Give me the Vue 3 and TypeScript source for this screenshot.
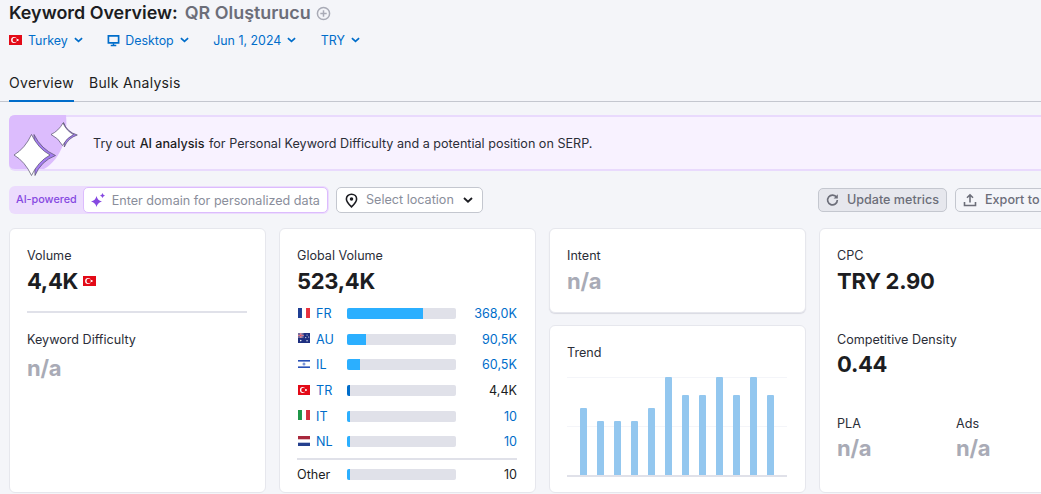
<script setup lang="ts">
interface CountryRow {
  flag: string
  code: string
  pct: number
  value: string
  current?: boolean
}

const filters = ['Turkey', 'Desktop', 'Jun 1, 2024', 'TRY']

const countries: CountryRow[] = [
  { flag: 'fr', code: 'FR', pct: 70, value: '368,0K' },
  { flag: 'au', code: 'AU', pct: 17.5, value: '90,5K' },
  { flag: 'il', code: 'IL', pct: 12, value: '60,5K' },
  { flag: 'tr', code: 'TR', pct: 2.8, value: '4,4K', current: true },
  { flag: 'it', code: 'IT', pct: 2.8, value: '10' },
  { flag: 'nl', code: 'NL', pct: 2.8, value: '10' }
]

// bar heights in px, chart is 98px tall
const trend = [67, 54, 54, 54, 67, 98, 80, 80, 98, 80, 98, 80]
</script>

<template>
  <div class="page">
    <svg class="defs" width="0" height="0" aria-hidden="true">
      <symbol id="flag-tr" viewBox="0 0 13 10" preserveAspectRatio="none">
        <rect width="13" height="10" fill="#e30a17" />
        <circle cx="5" cy="5" r="2.9" fill="#fff" />
        <circle cx="5.8" cy="5" r="2.3" fill="#e30a17" />
        <circle cx="8.6" cy="5" r="1.1" fill="#fff" />
      </symbol>
      <symbol id="flag-fr" viewBox="0 0 13 10" preserveAspectRatio="none">
        <rect width="13" height="10" fill="#fff" />
        <rect width="4.3" height="10" fill="#1f3f94" />
        <rect x="8.7" width="4.3" height="10" fill="#e8303c" />
      </symbol>
      <symbol id="flag-au" viewBox="0 0 13 10" preserveAspectRatio="none">
        <rect width="13" height="10" fill="#1e2f80" />
        <rect width="6" height="5" fill="#7b6f9e" />
        <path d="M0 2.5h6M3 0v5" stroke="#e8e0ea" stroke-width="1.2" />
        <path d="M0 2.5h6M3 0v5" stroke="#d0283c" stroke-width=".6" />
        <circle cx="3" cy="7.6" r=".8" fill="#fff" />
        <circle cx="9.8" cy="2" r=".6" fill="#fff" />
        <circle cx="11.6" cy="4" r=".6" fill="#fff" />
        <circle cx="8.4" cy="4.6" r=".6" fill="#fff" />
        <circle cx="9.8" cy="7.8" r=".7" fill="#fff" />
      </symbol>
      <symbol id="flag-il" viewBox="0 0 13 10" preserveAspectRatio="none">
        <rect width="13" height="10" fill="#fff" />
        <rect y="1" width="13" height="1.6" fill="#2a52b8" />
        <rect y="7.4" width="13" height="1.6" fill="#2a52b8" />
        <circle cx="6.5" cy="5" r="1.6" fill="#7d97d8" />
      </symbol>
      <symbol id="flag-it" viewBox="0 0 13 10" preserveAspectRatio="none">
        <rect width="13" height="10" fill="#fff" />
        <rect width="4.3" height="10" fill="#1f9648" />
        <rect x="8.7" width="4.3" height="10" fill="#d32f3c" />
      </symbol>
      <symbol id="flag-nl" viewBox="0 0 13 10" preserveAspectRatio="none">
        <rect width="13" height="10" fill="#fff" />
        <rect width="13" height="3.3" fill="#a8283c" />
        <rect y="6.7" width="13" height="3.3" fill="#24408e" />
      </symbol>
    </svg>

    <header class="head">
      <h1 class="title">
        <span>Keyword Overview:</span>
        <span class="keyword">QR Oluşturucu</span>
        <svg class="plus" viewBox="0 0 16 16" width="15" height="15">
          <circle cx="8" cy="8" r="6.5" fill="none" stroke="#a9abb6" stroke-width="1.6" />
          <path d="M8 4.6v6.8M4.6 8h6.8" stroke="#a9abb6" stroke-width="1.6" />
        </svg>
      </h1>
      <div class="filters">
        <button v-for="f in filters" :key="f" class="filter">
          <svg v-if="f === 'Turkey'" width="13" height="10"><use href="#flag-tr" /></svg>
          <svg v-if="f === 'Desktop'" class="desktop" viewBox="0 0 14 14" width="13" height="13">
            <path d="M1.5 2h11v7.5h-11z" fill="none" stroke="#006dca" stroke-width="1.8" />
            <path d="M4 12.5h6M7 10v2.5" stroke="#006dca" stroke-width="1.6" />
          </svg>
          <span>{{ f }}</span>
          <svg viewBox="0 0 10 6" width="9" height="6">
            <path d="M1 1l4 3.6L9 1" fill="none" stroke="#006dca" stroke-width="1.9" />
          </svg>
        </button>
      </div>
    </header>

    <nav class="tabs">
      <span class="tab active">Overview</span>
      <span class="tab">Bulk Analysis</span>
    </nav>

    <section class="banner">
      <svg class="stars" viewBox="0 0 80 56" width="80" height="56">
        <path d="M6 0H57C58 12 57 22 54 30C50 40 44 49 35 54H6Q0 54 0 48V6Q0 0 6 0Z" fill="#dcbcfd" />
        <path d="M25 19.500Q32 34 46.500 40.500Q32 46 26 60.500Z" fill="#a47cf0" stroke="#55506a" stroke-width=".7" stroke-linejoin="round" />
        <path d="M22.500 19.500Q29 33.500 41 40Q29 46.500 22.500 60.500Q16 46.500 5 40Q16 33.500 22.500 19.500Z" fill="#fff" stroke="#55506a" stroke-width=".7" stroke-linejoin="round" />
        <path d="M54.500 7.500Q58 17 68.300 20Q59 23 55.300 32Z" fill="#a47cf0" stroke="#55506a" stroke-width=".7" stroke-linejoin="round" />
        <path d="M54 8Q57.500 16 64.500 19.500Q57.500 23 53.500 30.500Q49.500 23 42 19.500Q49.500 16 54 8Z" fill="#fff" stroke="#55506a" stroke-width=".7" stroke-linejoin="round" />
      </svg>
      <p class="banner-text">
        Try out <strong>AI analysis</strong> for Personal Keyword Difficulty and a potential position on SERP.
      </p>
    </section>

    <div class="toolbar">
      <div class="ai-box">
        <span class="ai-label">AI-powered</span>
        <div class="ai-input">
          <svg viewBox="0 0 14 14" width="14" height="14">
            <path d="M5.500 3Q6.500 7.500 11 8.500Q6.500 9.500 5.500 14Q4.500 9.500 0 8.500Q4.500 7.500 5.500 3Z" fill="#8649e1" />
            <path d="M11.500 0Q12 2 14 2.500Q12 3 11.500 5Q11 3 9 2.500Q11 2 11.500 0Z" fill="#8649e1" />
          </svg>
          <span>Enter domain for personalized data</span>
        </div>
      </div>
      <div class="location">
        <svg viewBox="0 0 14 16" width="13" height="15">
          <path d="M7 1.200C3.700 1.200 1.500 3.600 1.500 6.500C1.500 10 5 13 7 14.800C9 13 12.500 10 12.500 6.500C12.500 3.600 10.300 1.200 7 1.200Z" fill="none" stroke="#1c1d22" stroke-width="1.700" />
          <circle cx="7" cy="6.500" r="1.900" fill="#1c1d22" />
        </svg>
        <span class="location-text">Select location</span>
        <svg viewBox="0 0 10 6" width="10" height="6">
          <path d="M1 1l4 3.600L9 1" fill="none" stroke="#1c1d22" stroke-width="1.900" />
        </svg>
      </div>
      <div class="actions">
        <button class="btn btn-off">
          <svg viewBox="0 0 14 14" width="14" height="14">
            <path d="M11.500 4.200A5.300 5.300 0 1 0 12.300 7" fill="none" stroke="#6c6e79" stroke-width="1.800" />
            <path d="M12.800 0.800V5.300H8.300Z" fill="#6c6e79" />
          </svg>
          <span class="btn-text">Update metrics</span>
        </button>
        <button class="btn btn-export">
          <svg viewBox="0 0 14 14" width="14" height="14">
            <path d="M7 9.500V2.500M4 4.800L7 1.800L10 4.800M1.500 9V12.500H12.500V9" fill="none" stroke="#6c6e79" stroke-width="1.600" />
          </svg>
          <span class="btn-text">Export to</span>
        </button>
      </div>
    </div>

    <main class="grid">
      <section class="card">
        <div class="label">Volume</div>
        <div class="value value-flag">
          4,4K
          <svg width="13" height="10"><use href="#flag-tr" /></svg>
        </div>
        <hr class="rule" />
        <div class="label">Keyword Difficulty</div>
        <div class="value na kd">n/a</div>
      </section>

      <section class="card">
        <div class="label">Global Volume</div>
        <div class="value">523,4K</div>
        <ul class="countries">
          <li v-for="c in countries" :key="c.code" class="country">
            <svg class="flag" width="12" height="10"><use :href="`#flag-${c.flag}`" /></svg>
            <span class="code">{{ c.code }}</span>
            <span class="bar">
              <span class="bar-fill" :class="{ current: c.current }" :style="{ width: c.pct + '%' }"></span>
            </span>
            <span class="amount" :class="{ dark: c.current }">{{ c.value }}</span>
          </li>
        </ul>
        <div class="country other">
          <span class="other-name">Other</span>
          <span class="bar"><span class="bar-fill" style="width: 2.8%"></span></span>
          <span class="amount dark">10</span>
        </div>
      </section>

      <div class="stack">
        <section class="card card-intent">
          <div class="label">Intent</div>
          <div class="value na">n/a</div>
        </section>
        <section class="card card-trend">
          <div class="label">Trend</div>
          <div class="chart">
            <span v-for="(h, i) in trend" :key="i" class="trend-bar" :style="{ height: h + 'px' }"></span>
          </div>
        </section>
      </div>

      <section class="card">
        <div class="label">CPC</div>
        <div class="value">TRY 2.90</div>
        <div class="label label-density">Competitive Density</div>
        <div class="value density">0.44</div>
        <div class="pair">
          <div>
            <div class="label">PLA</div>
            <div class="value na">n/a</div>
          </div>
          <div>
            <div class="label">Ads</div>
            <div class="value na">n/a</div>
          </div>
        </div>
      </section>
    </main>
  </div>
</template>

<style>
html,
body {
  margin: 0;
  height: 100%;
  overflow: hidden;
  background: #f4f5f9;
}
</style>

<style scoped>
.page {
  width: 1077px;
  height: 494px;
  box-sizing: border-box;
  padding-left: 9px;
  overflow: hidden;
  font-family: Inter, "Liberation Sans", sans-serif;
  font-size: 12.6px;
  color: #1c1d22;
  background: #f4f5f9;
}

.defs {
  position: absolute;
}

.title {
  display: flex;
  align-items: center;
  height: 24px;
  padding-top: 1px;
  margin: 0;
  font-size: 17.900px;
  font-weight: 600;
  line-height: 24px;
}

.keyword {
  margin-left: 7px;
  color: #6c6e79;
}

.plus {
  margin-left: 5px;
}

.filters {
  display: flex;
  gap: 24.500px;
  height: 30px;
  align-items: center;
}

.filter {
  display: flex;
  align-items: center;
  gap: 6px;
  padding: 0;
  border: 0;
  background: none;
  font: inherit;
  font-size: 12.400px;
  color: #006dca;
}

.desktop {
  margin-right: -1px;
}

.tabs {
  display: flex;
  gap: 15px;
  height: 46px;
  margin-left: -9px;
  padding-left: 9px;
  align-items: flex-end;
  border-bottom: 1px solid #c4c7cf;
}

.tab {
  height: 28px;
  font-size: 14px;
  line-height: 20px;
  letter-spacing: 0.3px;
}

.tab.active {
  border-bottom: 2px solid #006dca;
  height: 27px;
  margin-bottom: -1px;
}

.banner {
  display: flex;
  align-items: center;
  height: 56px;
  box-sizing: border-box;
  margin-top: 13px;
  border: 2px solid #e9dafd;
  border-right: 0;
  border-radius: 6px 0 0 6px;
  background: #f8f2ff;
}

.stars {
  flex: none;
  margin: -2px 0 -2px -2px;
  overflow: visible;
}

.banner-text {
  margin: 0 0 0 4px;
  color: #2b2e38;
}

.banner-text strong {
  font-weight: 500;
  color: #1c1d22;
  margin: 0 1px;
}

.toolbar {
  display: flex;
  align-items: center;
  gap: 7px;
  height: 28px;
  margin-top: 15px;
}

.ai-box {
  display: flex;
  align-items: center;
  gap: 6px;
  width: 320px;
  height: 28px;
  box-sizing: border-box;
  padding: 0 1px 0 7px;
  border-radius: 6px;
  background: #ecdcfd;
}

.ai-label {
  margin-bottom: 2px;
  font-size: 10.800px;
  font-weight: 500;
  color: #8649e1;
  white-space: nowrap;
}

.ai-input {
  display: flex;
  align-items: center;
  gap: 7px;
  flex: 1;
  height: 26px;
  box-sizing: border-box;
  padding-left: 7px;
  border: 1px solid #dcbcfd;
  border-radius: 5px;
  background: #fff;
  color: #8a8e9b;
  white-space: nowrap;
}

.location {
  display: flex;
  align-items: center;
  width: 147px;
  height: 26px;
  box-sizing: border-box;
  padding: 0 9px 0 8px;
  border: 1px solid #c4c7cf;
  border-radius: 5px;
  background: #fff;
}

.location-text {
  flex: 1;
  margin-left: 8px;
  margin-bottom: 2px;
  color: #8a8e9b;
}

.actions {
  display: flex;
  gap: 8px;
  margin-left: auto;
}

.btn {
  display: flex;
  align-items: center;
  gap: 8px;
  height: 24px;
  box-sizing: border-box;
  padding: 0 7px;
  border: 1px solid #c4c7cf;
  border-radius: 5px;
  font: inherit;
  color: #6c6e79;
  font-weight: 500;
  white-space: nowrap;
}

.btn-text {
  margin-bottom: 2px;
}

.btn-off {
  width: 129px;
  background: #e6e7ed;
}

.btn-export {
  width: 122px;
  background: #f4f5f9;
}

.grid {
  display: grid;
  grid-template-columns: repeat(4, 257px);
  gap: 13px;
  margin-top: 14px;
}

.card {
  height: 265px;
  box-sizing: border-box;
  padding: 18px 18px 0 17px;
  border: 1px solid #e6e7ed;
  border-radius: 6px;
  background: #fff;
}

.label {
  height: 18px;
  line-height: 18px;
  color: #2b2e38;
}

.value {
  height: 32px;
  font-size: 22px;
  font-weight: 700;
  line-height: 32px;
  letter-spacing: -0.3px;
}

.value-flag {
  display: flex;
  align-items: center;
  gap: 5px;
}

.na {
  color: #a9abb6;
}

.kd {
  margin-top: 3px;
}

.density {
  margin-top: -1px;
}

.rule {
  height: 2px;
  margin: 14px 0 18px;
  border: 0;
  background: #e0e1e9;
}

.countries {
  margin: 4px 0 0;
  padding: 0;
  list-style: none;
}

.country {
  display: flex;
  align-items: center;
  height: 25.600px;
}

.flag {
  flex: none;
  margin: 0 0 2px 1px;
}

.code {
  width: 31px;
  margin-left: 6px;
  color: #006dca;
}

.bar {
  flex: none;
  width: 109px;
  height: 11px;
  border-radius: 2px;
  background: #e0e1e9;
  overflow: hidden;
}

.bar-fill {
  display: block;
  height: 100%;
  background: #2bafff;
}

.bar-fill.current {
  background: #006dca;
}

.amount {
  flex: 1;
  text-align: right;
  color: #006dca;
}

.amount.dark {
  color: #1c1d22;
}

.other {
  margin-top: 3px;
  padding-top: 2px;
  border-top: 2px solid #e0e1e9;
}

.other-name {
  width: 50px;
}

.stack {
  display: flex;
  flex-direction: column;
  gap: 12px;
}

.card-intent {
  height: 85px;
  box-shadow: 0 1px 1px #d9dae2;
}

.card-trend {
  height: 168px;
}

.chart {
  display: flex;
  align-items: flex-end;
  gap: 10px;
  height: 98px;
  margin-top: 15px;
  padding-left: 13px;
  border-bottom: 2px solid #e0e1e9;
  background:
    linear-gradient(#f4f5f9, #f4f5f9) 0 0 / 100% 1px no-repeat,
    linear-gradient(#f4f5f9, #f4f5f9) 0 49px / 100% 1px no-repeat;
}

.trend-bar {
  width: 7px;
  border-radius: 1px 1px 0 0;
  background: #93c7ef;
}

.label-density {
  margin-top: 34px;
}

.pair {
  display: grid;
  grid-template-columns: 119px 1fr;
  margin-top: 35px;
}

.pair .value {
  margin-top: -1px;
}
</style>
